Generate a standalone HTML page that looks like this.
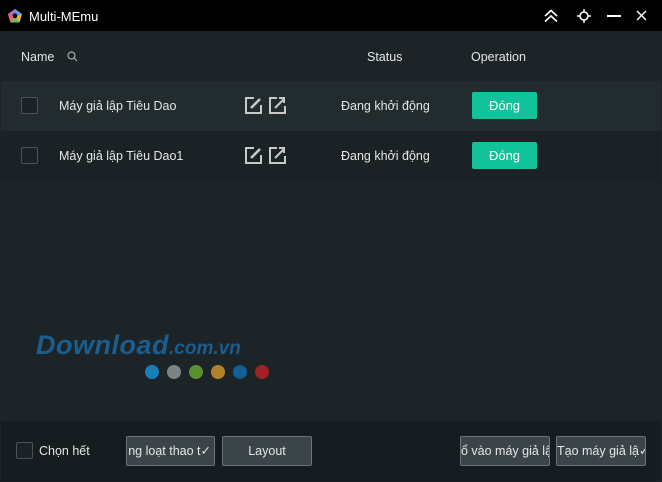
<!DOCTYPE html>
<html><head><meta charset="utf-8"><style>
*{margin:0;padding:0;box-sizing:border-box}
body{width:662px;height:482px;background:#1c2427;font-family:"Liberation Sans","DejaVu Sans",sans-serif;color:#e6e6e6;font-size:12px;position:relative;overflow:hidden}
.abs{position:absolute}
.title{left:0;top:0;width:662px;height:31px;background:#000}
.row{left:1px;width:660px;height:50px}
.cb{width:17px;height:17px;border:1px solid #4a5356;border-radius:2px;background:#1c2326}
.btn{background:#12c29b;color:#fff;text-align:center;line-height:27px;width:65px;height:27px;border-radius:2px;font-size:13px}
.fb{border:1px solid #6a7478;background:#3b4549;border-radius:2px;height:30px;line-height:28px;text-align:center;color:#e6e6e6;font-size:12.5px;overflow:hidden;white-space:nowrap}
.dot{width:14px;height:14px;border-radius:50%;top:365px}
</style></head><body>
<div class="abs title"></div>
<svg class="abs" style="left:7px;top:8px" width="16" height="16" viewBox="0 0 16 16"><polygon points="8,1 15,6 12.5,14.5 3.5,14.5 1,6" fill="#f0b030"/><polygon points="8,1 15,6 8,8" fill="#5aa0f0"/><polygon points="1,6 8,1 8,8" fill="#a070e0"/><polygon points="1,6 3.5,14.5 8,8" fill="#f06060"/><polygon points="3.5,14.5 12.5,14.5 8,8" fill="#60c060"/><polygon points="8,5 10.5,7 9.5,10 6.5,10 5.5,7" fill="#000"/></svg>
<div class="abs" style="left:29px;top:9px;font-size:13px;color:#fff">Multi-MEmu</div>
<svg class="abs" style="left:543px;top:9px" width="16" height="14" viewBox="0 0 16 14" fill="none" stroke="#fff" stroke-width="1.6"><path d="M2 7 L8 1.5 L14 7 M2 12.5 L8 7 L14 12.5"/></svg>
<svg class="abs" style="left:576px;top:8px" width="16" height="16" viewBox="0 0 16 16" fill="none" stroke="#fff" stroke-width="1.5"><circle cx="8" cy="8" r="4"/><path d="M8 1v3M8 12v3M1 8h3M12 8h3"/></svg>
<div class="abs" style="left:607px;top:15px;width:14px;height:2px;background:#fff"></div>
<svg class="abs" style="left:636px;top:10px" width="11" height="11" viewBox="0 0 11 11" stroke="#fff" stroke-width="1.4"><path d="M1 1L10 10M10 1L1 10"/></svg>

<div class="abs" style="left:21px;top:50px;font-size:12.5px">Name</div>
<svg class="abs" style="left:67px;top:51px" width="11" height="11" viewBox="0 0 11 11" fill="none" stroke="#aaa" stroke-width="1.2"><circle cx="4.5" cy="4.5" r="3.5"/><path d="M7 7l3 3"/></svg>
<div class="abs" style="left:367px;top:50px;font-size:12.5px">Status</div>
<div class="abs" style="left:471px;top:50px;font-size:12.5px">Operation</div>

<div class="abs row" style="top:81px;background:#222b2e"></div>
<div class="abs row" style="top:131px;background:#1a2225"></div>

<div class="abs cb" style="left:21px;top:97px"></div>
<div class="abs" style="left:59px;top:99px;font-size:12.5px">Máy giả lập Tiêu Dao</div>
<div class="abs cb" style="left:21px;top:147px"></div>
<div class="abs" style="left:59px;top:149px;font-size:12.5px">Máy giả lập Tiêu Dao1</div>

<svg class="abs" style="left:245px;top:96px" width="42" height="18" viewBox="0 0 42 18" fill="none" stroke="#c8c8c8" stroke-width="2"><path d="M9 2H1v15h15v-8"/><path d="M6 12L15 3" stroke-width="2.6"/><path d="M32 2H25v15h15v-7M30 12L39 3M34 2h5v5"/></svg>
<svg class="abs" style="left:245px;top:146px" width="42" height="18" viewBox="0 0 42 18" fill="none" stroke="#c8c8c8" stroke-width="2"><path d="M9 2H1v15h15v-8"/><path d="M6 12L15 3" stroke-width="2.6"/><path d="M32 2H25v15h15v-7M30 12L39 3M34 2h5v5"/></svg>

<div class="abs" style="left:341px;top:99px;font-size:12.5px">Đang khởi động</div>
<div class="abs" style="left:341px;top:149px;font-size:12.5px">Đang khởi động</div>
<div class="abs btn" style="left:472px;top:92px">Đóng</div>
<div class="abs btn" style="left:472px;top:142px">Đóng</div>

<div class="abs" style="left:36px;top:330px;font-size:27px;font-weight:bold;font-style:italic;color:#1a5d8f;letter-spacing:0.5px;white-space:nowrap">Download<span style="font-size:19px;letter-spacing:0">.com.vn</span></div>
<div class="abs dot" style="left:145px;background:#1a7fb8"></div>
<div class="abs dot" style="left:167px;background:#7c8285"></div>
<div class="abs dot" style="left:189px;background:#5a8f32"></div>
<div class="abs dot" style="left:211px;background:#b0802a"></div>
<div class="abs dot" style="left:233px;background:#145f95"></div>
<div class="abs dot" style="left:255px;background:#a02025"></div>

<div class="abs" style="left:1px;top:421px;width:660px;height:60px;background:#161d20"></div>
<div class="abs cb" style="left:16px;top:442px"></div>
<div class="abs" style="left:39px;top:444px;font-size:12.5px">Chọn hết</div>
<div class="abs fb" style="left:126px;top:436px;width:89px;text-align:right;padding-right:3px">ng loạt thao t✓</div>
<div class="abs fb" style="left:222px;top:436px;width:90px">Layout</div>
<div class="abs fb" style="left:460px;top:436px;width:90px;text-align:right;padding-right:1px">ổ vào máy giả lậ</div>
<div class="abs fb" style="left:556px;top:436px;width:90px;text-align:right;padding-right:3px">Tạo máy giả lậ✓</div>
</body></html>
